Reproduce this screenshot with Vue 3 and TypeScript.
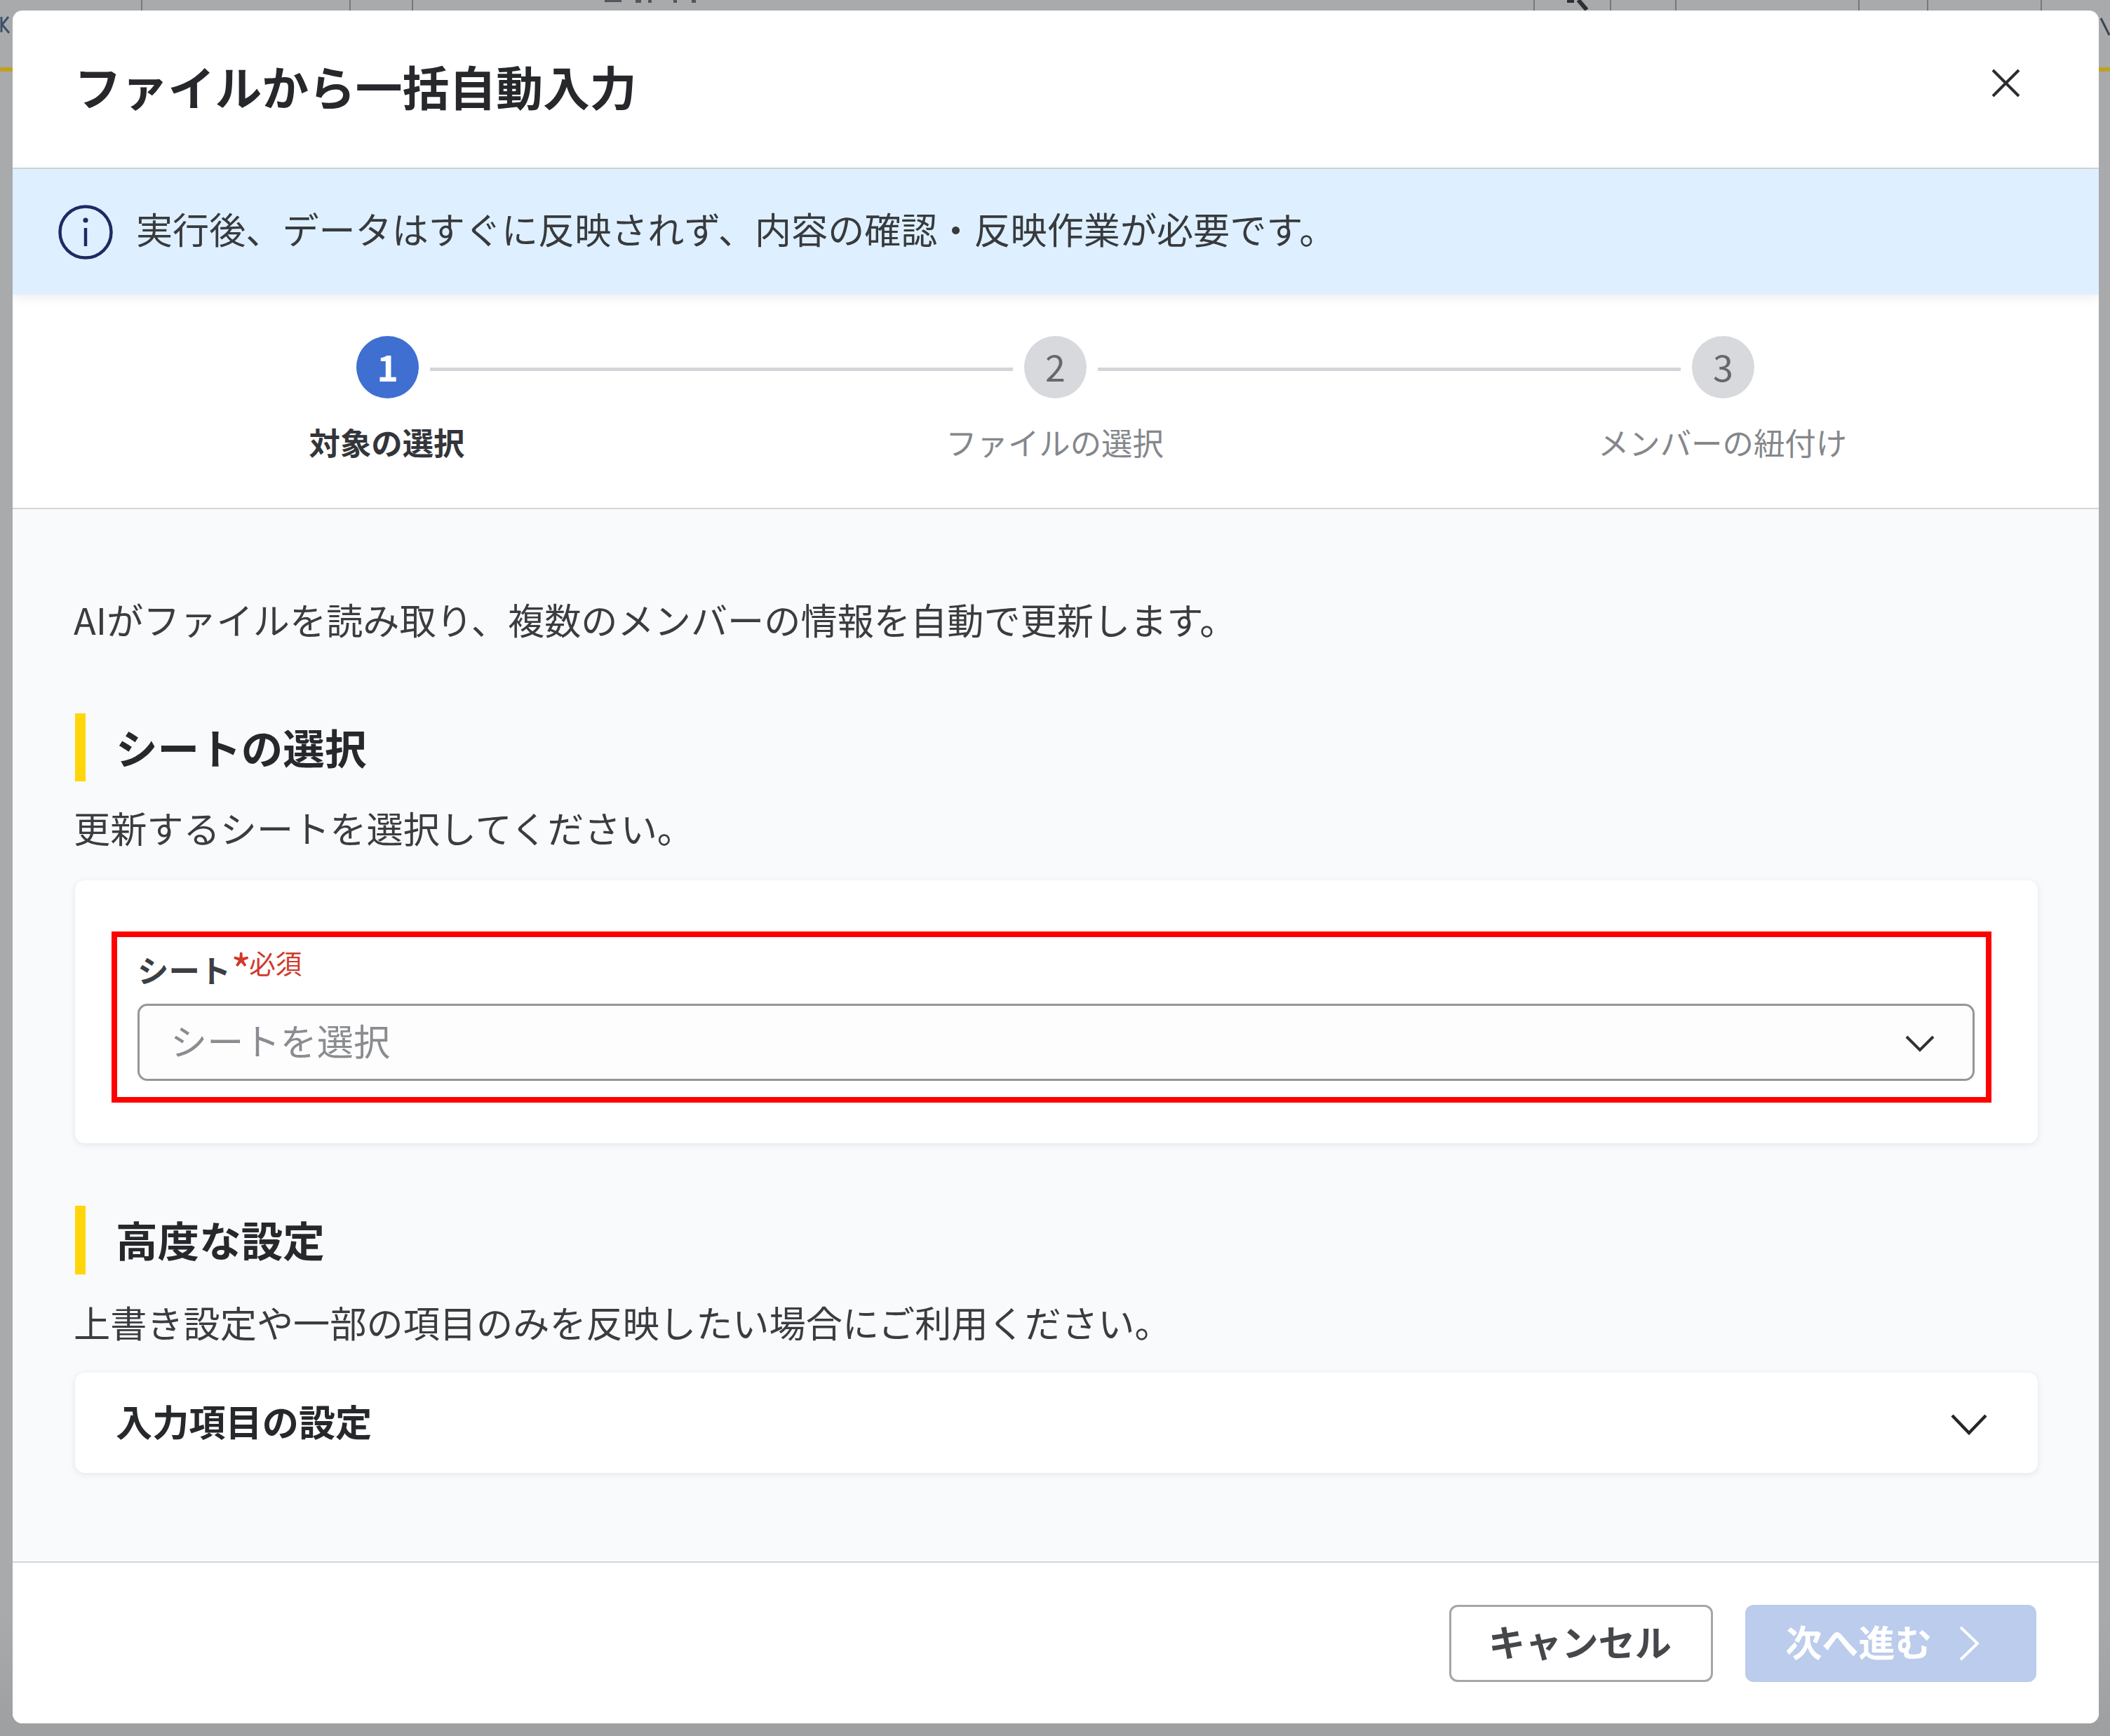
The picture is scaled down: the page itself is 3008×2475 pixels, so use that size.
<script setup lang="ts">
const gridLines: number[] = [201, 498, 587, 2186, 2295, 2388, 2649, 2747, 2909]
const steps = [
  { n: 1, label: '対象の選択', active: true },
  { n: 2, label: 'ファイルの選択', active: false },
  { n: 3, label: 'メンバーの紐付け', active: false },
]
</script>

<template>
  <div class="page">
    <div class="backdrop" aria-hidden="true">
      <i v-for="x in gridLines" :key="x" class="grid-line" :style="{ left: x + 'px' }"></i>
      <i class="accent accent-left"></i>
      <i class="accent accent-right"></i>
      <svg class="peek-search" viewBox="0 0 132 4"><path d="M0 0h24v3H0zM44 0h8v4h-8zM62 0h5v4h-5zM98 0h5v4h-5zM124 0h6v4h-6z" fill="#55565a" /></svg>
      <svg class="peek-left" viewBox="0 0 16 26"><path d="M2 1v22M12 1L3 12l10 12" fill="none" stroke="#3d5068" stroke-width="3" /></svg>
      <svg class="peek-lens" viewBox="0 0 40 16"><path d="M2 1h10M18 0l12 14" fill="none" stroke="#2e3033" stroke-width="6" /></svg>
      <svg class="peek-right" viewBox="0 0 14 30"><path d="M1 2l12 24" fill="none" stroke="#3a4250" stroke-width="3" /></svg>
    </div>

    <section class="modal">
      <header class="modal-header">
        <h1 class="modal-title">ファイルから一括自動入力</h1>
        <svg class="close" viewBox="0 0 41 41"><path d="M2 2l37 37M39 2L2 39" fill="none" stroke="#2b2d31" stroke-width="4" /></svg>
      </header>

      <div class="banner">
        <svg class="info" viewBox="0 0 78 78">
          <circle cx="39" cy="39" r="36.5" fill="none" stroke="#1e2a63" stroke-width="4.5" />
          <circle cx="39" cy="22" r="3.6" fill="#1e2a63" />
          <path d="M39 33v26" stroke="#1e2a63" stroke-width="4.5" fill="none" />
        </svg>
        <p class="banner-text">実行後、データはすぐに反映されず、内容の確認・反映作業が必要です。</p>
      </div>

      <div class="stepper">
        <div class="step-track">
          <template v-for="(s, i) in steps" :key="s.n">
            <span v-if="i > 0" class="step-line"></span>
            <span class="step-dot" :class="{ on: s.active }">{{ s.n }}</span>
          </template>
        </div>
        <div class="step-labels">
          <span v-for="s in steps" :key="s.n" class="step-label" :class="{ on: s.active }">{{ s.label }}</span>
        </div>
      </div>

      <main class="modal-body">
        <p class="intro">AIがファイルを読み取り、複数のメンバーの情報を自動で更新します。</p>

        <h2 class="section-title first">シートの選択</h2>
        <p class="section-desc">更新するシートを選択してください。</p>
        <div class="card sheet-card">
          <div class="field-label">
            <span class="field-name">シート</span><span class="req-star">*</span><span class="req-text">必須</span>
          </div>
          <div class="select">
            <span class="placeholder">シートを選択</span>
            <svg class="select-chevron" viewBox="0 0 42 24"><path d="M2 2l19 19L40 2" fill="none" stroke="#303236" stroke-width="4" /></svg>
          </div>
          <div class="annotation"></div>
        </div>

        <h2 class="section-title second">高度な設定</h2>
        <p class="section-desc tight">上書き設定や一部の項目のみを反映したい場合にご利用ください。</p>
        <div class="card collapse-card">
          <span class="collapse-title">入力項目の設定</span>
          <svg class="collapse-chevron" viewBox="0 0 52 30"><path d="M2 2l24 25L50 2" fill="none" stroke="#24262a" stroke-width="4.4" /></svg>
        </div>
      </main>

      <footer class="modal-footer">
        <button class="btn cancel" type="button"><span class="btn-text">キャンセル</span></button>
        <button class="btn next" type="button">
          <span class="btn-text">次へ進む</span>
          <svg class="next-chevron" viewBox="0 0 30 50"><path d="M3 2l24 23L3 48" fill="none" stroke="#fff" stroke-width="4" /></svg>
        </button>
      </footer>
    </section>
  </div>
</template>

<style>
html,
body {
  margin: 0;
  background: #a6a7a9;
}
</style>

<style scoped>
* {
  box-sizing: border-box;
}

.page {
  position: relative;
  width: 3008px;
  height: 2475px;
  overflow: hidden;
  padding: 15px 16px 18px 18px;
  background: linear-gradient(#a9aaac 0, #a9aaac 2300px, #9e9fa1 2475px);
  font-family: "Noto Sans CJK JP", "Noto Sans", sans-serif;
  color: #333539;
}

.backdrop {
  position: absolute;
  inset: 0;
}

.grid-line {
  position: absolute;
  top: 0;
  width: 2px;
  height: 15px;
  background: #77787b;
}

.accent {
  position: absolute;
  top: 96px;
  height: 6px;
  background: #bfa11f;
}

.accent-left {
  left: 0;
  width: 18px;
}

.accent-right {
  right: 0;
  width: 16px;
}

.peek-search {
  position: absolute;
  left: 862px;
  top: 0;
  width: 132px;
  height: 4px;
}

.peek-left {
  position: absolute;
  left: 0;
  top: 23px;
  width: 16px;
  height: 26px;
}

.peek-lens {
  position: absolute;
  left: 2232px;
  top: 0;
  width: 40px;
  height: 16px;
}

.peek-right {
  position: absolute;
  left: 2994px;
  top: 24px;
  width: 14px;
  height: 30px;
}

.modal {
  position: relative;
  display: flex;
  flex-direction: column;
  height: 100%;
  border-radius: 14px;
  overflow: hidden;
  background: #fff;
}

.modal-header {
  display: flex;
  align-items: center;
  justify-content: space-between;
  height: 226px;
  padding: 0 112px 0 88px;
  border-bottom: 2px solid #d4d5d8;
}

.modal-title {
  margin: 0 0 10px;
  font-size: 66.8px;
  line-height: 90px;
  font-weight: 700;
  color: #26282c;
}

.close {
  width: 41px;
  height: 41px;
  margin-bottom: 18px;
}

.banner {
  display: flex;
  align-items: center;
  gap: 33px;
  height: 179px;
  padding-left: 65px;
  background: #def0ff;
  box-shadow: 0 4px 14px rgba(60, 70, 90, 0.1);
  position: relative;
}

.info {
  width: 78px;
  height: 78px;
  flex: none;
}

.banner-text {
  margin: 0 0 9px;
  font-size: 52.1px;
  line-height: 72px;
  color: #383a3e;
}

.stepper {
  height: 306px;
  padding-top: 59px;
  border-bottom: 2px solid #d4d5d8;
}

.step-track {
  display: flex;
  align-items: center;
  justify-content: center;
  padding-right: 1px;
}

.step-dot {
  display: flex;
  align-items: center;
  justify-content: center;
  flex: none;
  width: 89px;
  height: 89px;
  padding-bottom: 4px;
  border-radius: 50%;
  background: #d8d9dd;
  color: #66686c;
  font-size: 52px;
  line-height: 1;
}

.step-dot.on {
  background: #3f6fd1;
  color: #fff;
  font-weight: 700;
}

.step-line {
  flex: none;
  width: 831px;
  height: 5px;
  margin: 6px 16px 0;
  background: #d4d5d9;
}

.step-labels {
  display: grid;
  grid-template-columns: repeat(3, 952px);
  justify-content: center;
  margin-top: 32px;
  padding-right: 3px;
}

.step-label {
  text-align: center;
  font-size: 44.4px;
  line-height: 60px;
  color: #85878b;
}

.step-label.on {
  font-weight: 700;
  color: #33353a;
}

.modal-body {
  flex: 1;
  padding: 120px 87px 0 89px;
  background: #f9fafc;
}

.intro,
.section-desc {
  margin: 0 0 0 -2px;
  font-size: 52.2px;
  line-height: 72px;
  color: #3a3c40;
}

.section-title {
  display: flex;
  align-items: center;
  margin: 99px 0 0;
  height: 97px;
  padding: 0 0 4px 43px;
  border-left: 15px solid #ffd60a;
  font-size: 59.6px;
  font-weight: 700;
  color: #26282c;
}

.section-title.second {
  height: 98px;
  margin-top: 89px;
}

.section-desc {
  margin-top: 29px;
}

.section-desc.tight {
  margin-top: 31px;
}

.card {
  position: relative;
  margin-top: 40px;
  border-radius: 14px;
  background: #fff;
  box-shadow: 0 2px 10px rgba(40, 50, 70, 0.1);
}

.sheet-card {
  height: 375px;
  padding: 98px 90px 0 89px;
}

.field-label {
  display: flex;
  align-items: flex-start;
  height: 60px;
  margin-bottom: 18px;
}

.field-name {
  margin-top: -1px;
  font-size: 44.4px;
  line-height: 60px;
  font-weight: 700;
  color: #3c3e42;
}

.req-star {
  margin: -3px -3px 0 0;
  font-size: 62px;
  line-height: 60px;
  color: #d0392b;
}

.req-text {
  margin-top: -9px;
  font-size: 37.5px;
  line-height: 56px;
  color: #d0392b;
}

.select {
  display: flex;
  align-items: center;
  justify-content: space-between;
  height: 110px;
  padding: 0 54px 0 44px;
  border: 3px solid #95969a;
  border-radius: 14px;
  background: #fdfdfe;
}

.placeholder {
  margin-bottom: 8px;
  font-size: 52.2px;
  line-height: 72px;
  color: #8a8c90;
}

.select-chevron {
  width: 42px;
  height: 24px;
  margin-top: 4px;
}

.annotation {
  position: absolute;
  left: 52px;
  top: 73px;
  width: 2680px;
  height: 244px;
  border: 8px solid #ff0000;
}

.collapse-card {
  display: flex;
  align-items: center;
  justify-content: space-between;
  height: 143px;
  margin-top: 37px;
  padding: 0 72px 0 58px;
}

.collapse-title {
  margin-bottom: 8px;
  font-size: 52.2px;
  line-height: 72px;
  font-weight: 700;
  color: #26282c;
}

.collapse-chevron {
  width: 52px;
  height: 30px;
  margin-top: 4px;
}

.modal-footer {
  display: flex;
  justify-content: flex-end;
  gap: 46px;
  height: 231px;
  padding: 60px 89px 0 0;
  border-top: 2px solid #d4d5d8;
  background: #fff;
}

.btn {
  display: flex;
  align-items: center;
  justify-content: center;
  height: 110px;
  border-radius: 12px;
  font-family: inherit;
  font-size: 52.2px;
  line-height: 1;
  font-weight: 700;
}

.btn-text {
  margin-bottom: 8px;
}

.cancel {
  width: 376px;
  padding: 0 3px 0 0;
  border: 3px solid #a5a6a9;
  background: #fff;
  color: #45474b;
}

.next {
  gap: 38px;
  width: 415px;
  padding: 0 24px 0 0;
  border: 0;
  background: #bbccec;
  color: #fff;
}

.next-chevron {
  width: 30px;
  height: 50px;
}
</style>
